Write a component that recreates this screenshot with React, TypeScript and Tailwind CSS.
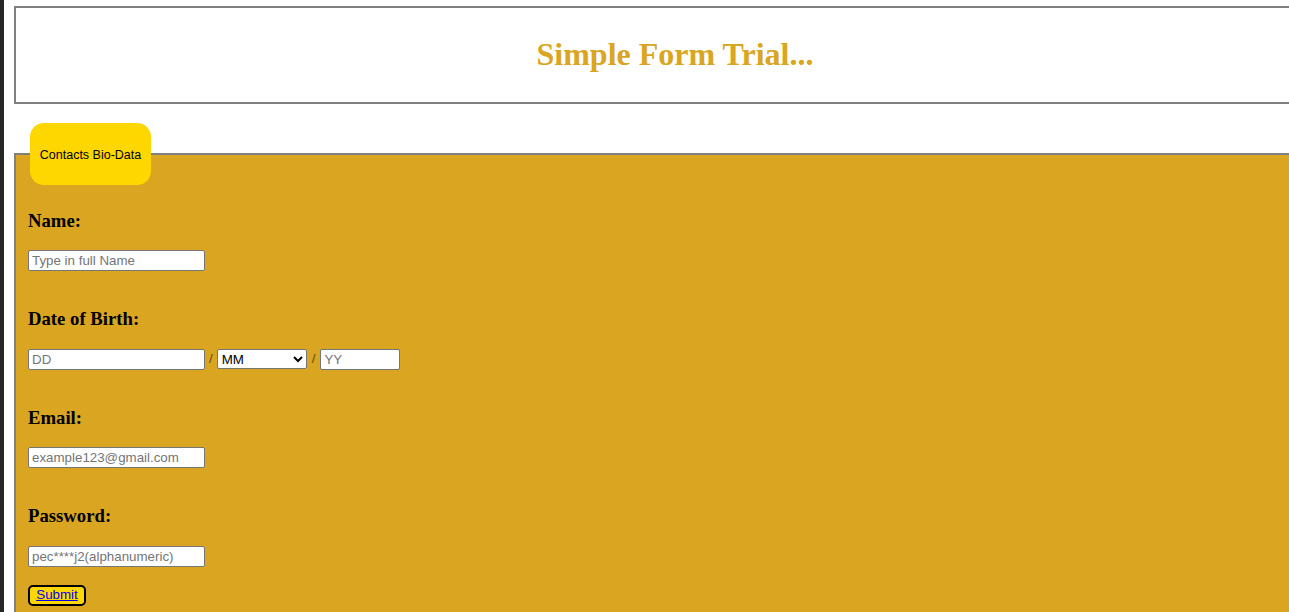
const serif = { fontFamily: '"Liberation Serif", "Times New Roman", serif' };

function Label({ text }: { text: string }) {
  return (
    <h3 className="h-[22px] text-[18.72px] font-bold leading-[22px] text-black" style={serif}>{text}</h3>
  );
}

function Field({ label, last, children }: { label: string; last?: boolean; children: React.ReactNode }) {
  return (
    <div className={last ? '' : 'mb-[37.2px]'}>
      <Label text={label} />
      <div className="mt-[18.3px] flex items-center">{children}</div>
    </div>
  );
}

function TextBox({ placeholder, width = 'w-[177px]' }: { placeholder: string; width?: string }) {
  return (
    <input
      type="text"
      placeholder={placeholder}
      className={`${width} h-[21px] rounded-[2px] border border-[#767676] bg-white px-[3px] text-[13.33px] text-black placeholder:text-[#757575] focus:outline-none`}
    />
  );
}

const months = ['01', '02', '03', '04', '05', '06', '07', '08', '09', '10', '11', '12'];

export default function App() {
  return (
    <div className="flex h-[612px] w-[1289px] overflow-hidden bg-white font-['Liberation_Sans',Arial,sans-serif]">
      <div className="h-full w-[4px] shrink-0 bg-[#272727]" />
      <div className="shrink-0 pl-[10px] pt-[6px]">
        <header className="flex h-[98px] w-[1322px] items-center justify-center border-2 border-[#808080] pb-[2px]">
          <h1 className="text-[32px] font-bold leading-none text-[#DAA520]" style={serif}>
            Simple Form Trial...
          </h1>
        </header>

        <form className="mt-[49px] w-[1322px] border-2 border-[#808080] bg-[#DAA520] pb-[40px]">
          <div className="-mt-[32px] ml-[14px] flex h-[62px] w-[121px] items-center justify-center rounded-[14px] bg-[#FFD700] pt-[2px] text-[12.5px] text-black">
            Contacts Bio-Data
          </div>

          <div className="mt-[25px] pl-[12px]">
            <Field label="Name:">
              <TextBox placeholder="Type in full Name" />
            </Field>

            <Field label="Date of Birth:">
              <TextBox placeholder="DD" />
              <span className="px-[4px] text-[13.33px] text-[#5a4a1a]">/</span>
              <select
                defaultValue="MM"
                className="h-[20px] w-[90px] rounded-[2px] border border-[#767676] bg-white text-[13.33px] text-black"
              >
                <option value="MM">MM</option>
                {months.map((m) => (
                  <option key={m} value={m}>{m}</option>
                ))}
              </select>
              <span className="px-[5px] text-[13.33px] text-[#5a4a1a]">/</span>
              <TextBox placeholder="YY" width="w-[80px]" />
            </Field>

            <Field label="Email:">
              <TextBox placeholder="example123@gmail.com" />
            </Field>

            <Field label="Password:" last>
              <TextBox placeholder="pec****j2(alphanumeric)" />
            </Field>

            <button
              type="button"
              className="mt-[18px] flex h-[21px] w-[58px] items-center justify-center rounded-[5px] border-2 border-black bg-[#FFD700] text-[13.33px] text-[#0000EE] underline"
            >
              Submit
            </button>
          </div>
        </form>
      </div>
    </div>
  );
}
